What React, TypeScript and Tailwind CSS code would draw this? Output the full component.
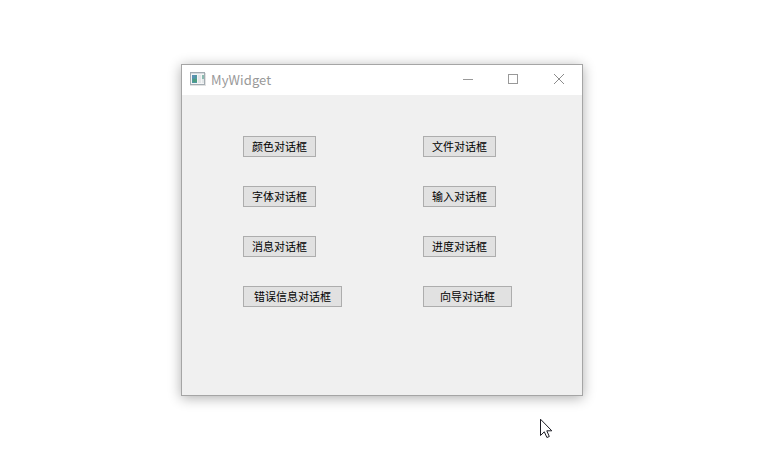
const rows: { left: string; right: string }[] = [
  { left: '颜色对话框', right: '文件对话框' },
  { left: '字体对话框', right: '输入对话框' },
  { left: '消息对话框', right: '进度对话框' },
  { left: '错误信息对话框', right: '向导对话框' },
];

function PushButton({ label, width }: { label: string; width: string }) {
  return (
    <button
      type="button"
      className={`flex h-[21px] items-center justify-center whitespace-nowrap border border-[#adadad] bg-[#e1e1e1] text-[11px] leading-none text-black ${width}`}
    >
      {label}
    </button>
  );
}

function AppIcon() {
  return (
    <svg width="16" height="14" viewBox="0 0 16 14" className="mb-0.5 shrink-0" shapeRendering="crispEdges">
      <rect x="0" y="0" width="15" height="13" fill="#a3acb2" />
      <rect x="0" y="13" width="16" height="1" fill="#e2e2e2" />
      <rect x="15" y="1" width="1" height="13" fill="#e2e2e2" />
      <rect x="1" y="1" width="13" height="1" fill="#d5dade" />
      <rect x="1" y="2" width="13" height="10" fill="#f4f5f6" />
      <rect x="2" y="3" width="5" height="8" fill="#5198a0" />
      <rect x="2" y="3" width="3" height="3" fill="#5b91b4" />
      <rect x="3" y="7" width="4" height="3" fill="#4c9d81" />
      <rect x="8" y="3" width="3" height="8" fill="#e3e5e7" />
      <rect x="12" y="3" width="2" height="4" fill="#8bbbb0" />
      <rect x="12" y="7" width="2" height="4" fill="#e3e7e8" />
    </svg>
  );
}

function TitleBar() {
  return (
    <header className="flex h-[30px] items-center bg-white pl-2 text-[#999999]">
      <AppIcon />
      <span className="mb-0.5 ml-[5px] text-[13px] leading-none tracking-[0.1px]">MyWidget</span>
      <div className="ml-auto flex h-full">
        <svg width="45" height="30" viewBox="0 0 45 30" fill="none" stroke="#999999" shapeRendering="crispEdges">
          <path d="M17 14.5H27" />
        </svg>
        <svg width="45" height="30" viewBox="0 0 45 30" fill="none" stroke="#999999" shapeRendering="crispEdges">
          <path d="M17.5 9.5h9v9h-9z" />
        </svg>
        <svg width="46" height="30" viewBox="0 0 46 30" fill="none" stroke="#8c8c8c">
          <path d="M18 9l10 10M28 9L18 19" />
        </svg>
      </div>
    </header>
  );
}

export default function App() {
  return (
    <main className="relative h-[469px] w-[765px] overflow-hidden bg-white pl-[181px] pt-16 font-['Noto_Sans_CJK_SC',sans-serif]">
      <section className="flex h-[332px] w-[402px] flex-col border border-[#a5a5a5] bg-[#f0f0f0] shadow-[0_2px_12px_rgba(0,0,0,0.32)]">
        <TitleBar />
        <div className="flex flex-col gap-[29px] pl-[61px] pt-[41px]">
          {rows.map((row, i) => (
            <div key={row.left} className="grid grid-cols-[180px_auto] justify-start">
              <PushButton label={row.left} width={i === 3 ? 'w-[99px]' : 'w-[73px]'} />
              <PushButton label={row.right} width={i === 3 ? 'w-[89px]' : 'w-[73px]'} />
            </div>
          ))}
        </div>
      </section>
      <svg className="absolute left-[540px] top-[418px]" width="13" height="21" viewBox="0 0 13 21">
        <path d="M.5 1.2v16.3l3.8-3.7 2.6 5.7 2.4-1-2.5-5.7h5z" fill="#fff" stroke="#1c1c24" />
      </svg>
    </main>
  );
}
